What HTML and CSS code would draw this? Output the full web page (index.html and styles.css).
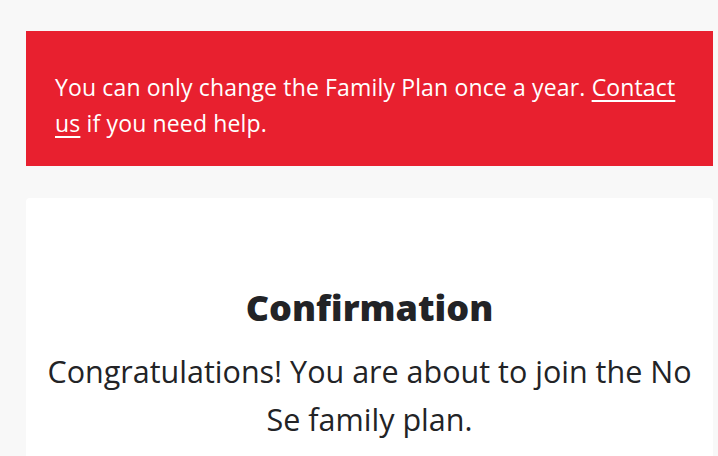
FILE: index.html
```html
<!DOCTYPE html>
<html lang="en">
<head>
  <meta charset="UTF-8">
  <title>Family Plan</title>
  <link rel="stylesheet" href="styles.css">
</head>
<body>
  <main class="page">
    <div class="alert">
      <p>You can only change the Family Plan once a year. <a href="#">Contact us</a> if you need help.</p>
    </div>

    <section class="card">
      <h1>Confirmation</h1>
      <p>Congratulations! You are about to join the No Se family plan.</p>
    </section>
  </main>
</body>
</html>
```

FILE: styles.css
```css
body {
  margin: 0;
  background: #f8f8f8;
  font-family: "Open Sans", "Noto Sans", Arial, sans-serif;
  color: #222326;
}

.page {
  padding: 31px 5px 0 26px;
}

.alert {
  background: #e8202f;
  color: #fff;
  padding: 38px 29px 25px;
}

.alert p {
  margin: 0;
  font-size: 23px;
  line-height: 36px;
  letter-spacing: 0.15px;
}

.alert a {
  color: #fff;
  text-decoration: underline;
  text-underline-offset: 4px;
}

.card {
  background: #fff;
  margin-top: 32px;
  border-radius: 4px;
  padding: 88px 20px 40px;
  text-align: center;
}

.card h1 {
  margin: 0 0 17px;
  font-size: 36px;
  line-height: 44px;
  font-weight: 800;
}

.card p {
  margin: 0;
  font-size: 30.5px;
  line-height: 48px;
}
```
